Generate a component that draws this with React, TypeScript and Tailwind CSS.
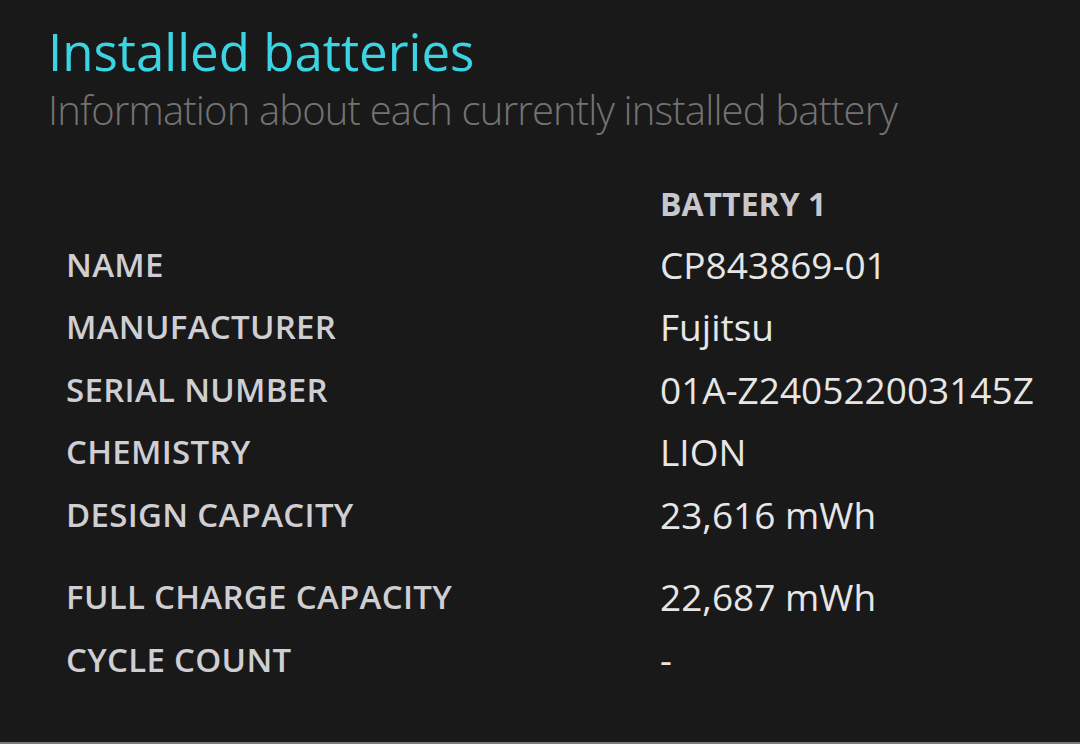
const rows = [
  { label: "NAME", value: "CP843869-01" },
  { label: "MANUFACTURER", value: "Fujitsu" },
  { label: "SERIAL NUMBER", value: "01A-Z240522003145Z" },
  { label: "CHEMISTRY", value: "LION" },
  { label: "DESIGN CAPACITY", value: "23,616 mWh" },
];

const rows2 = [
  { label: "FULL CHARGE CAPACITY", value: "22,687 mWh" },
  { label: "CYCLE COUNT", value: "-" },
];

function Row({ label, value }: { label: string; value: string }) {
  return (
    <div className="grid grid-cols-[594px_1fr] h-[62.5px] items-center">
      <div className="text-[33px] font-semibold text-[#cfcfd3] tracking-[0.3px]">{label}</div>
      <div className="text-[37px] text-[#e6e6e6]">{value}</div>
    </div>
  );
}

export default function App() {
  return (
    <div className="w-[1080px] h-[744px] bg-[#1a1919] flex flex-col font-['Open_Sans',sans-serif] overflow-hidden">
      <div className="flex-1 pl-[48px] pt-[21px]">
        <h1 className="text-[51px] leading-[60px] text-[#3ad4e2] font-normal">Installed batteries</h1>
        <p className="mt-[4px] text-[40px] leading-[50px] font-light text-[#737373] tracking-[-0.85px]">
          Information about each currently installed battery
        </p>

        <div className="pl-[18px] pt-[40px]">
          <div className="grid grid-cols-[594px_1fr] h-[58px] items-center">
            <div />
            <div className="text-[32px] font-bold text-[#c8c8cc]">BATTERY 1</div>
          </div>
          {rows.map((r) => (
            <Row key={r.label} {...r} />
          ))}
          <div className="h-[20px]" />
          {rows2.map((r) => (
            <Row key={r.label} {...r} />
          ))}
        </div>
      </div>
      <div className="h-[2px] bg-[#7a7a7a]" />
    </div>
  );
}
